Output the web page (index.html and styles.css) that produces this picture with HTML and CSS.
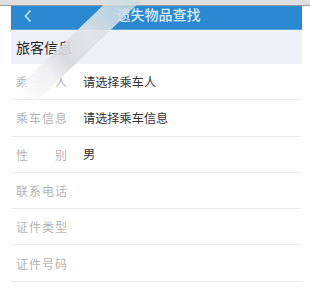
FILE: index.html
```html
<!DOCTYPE html>
<html lang="zh">
<head>
<meta charset="utf-8">
<link rel="stylesheet" href="styles.css">
</head>
<body>
<div class="topstrip"></div>
<div class="page">
  <header class="navbar">
    <svg class="back" width="10" height="14" viewBox="0 0 10 14"><path d="M7.5 1.5 L2.5 7 L7.5 12.5" fill="none" stroke="#cfe6f5" stroke-width="1.6"/></svg>
    <div class="title">遗失物品查找</div>
  </header>
  <div class="section">旅客信息</div>
  <div class="row"><span class="label">乘车人</span><span class="value">请选择乘车人</span></div>
  <div class="row"><span class="label">乘车信息</span><span class="value">请选择乘车信息</span></div>
  <div class="row"><span class="label">性别</span><span class="value">男</span></div>
  <div class="row"><span class="label">联系电话</span><span class="value"></span></div>
  <div class="row"><span class="label">证件类型</span><span class="value"></span></div>
  <div class="row"><span class="label">证件号码</span><span class="value"></span></div>
</div>
<div class="watermark"></div>
</body>
</html>
```
FILE: styles.css
```css
html, body {
  margin: 0;
  padding: 0;
  background: #fff;
  font-family: "Noto Sans CJK SC", "Noto Sans", sans-serif;
}
body {
  position: relative;
  width: 310px;
  height: 288px;
  overflow: hidden;
}
.topstrip {
  height: 5px;
  background: #dedede;
  border-bottom: 1px solid #9a9a9a;
}
.page {
  margin-left: 11px;
  width: 291px;
}
.navbar {
  position: relative;
  height: 23px;
  background: #2a89d0;
  display: flex;
  align-items: center;
  justify-content: center;
  border-bottom: 1px solid #5aa3da;
}
.back {
  position: absolute;
  left: 12px;
  top: 3px;
}
.title {
  color: #d9ecf8;
  font-size: 14px;
  line-height: 14px;
  font-weight: 500;
  margin-top: -8px;
  margin-left: 4px;
}
.section {
  height: 34px;
  background: #eef0f6;
  display: flex;
  align-items: center;
  padding-left: 5px;
  font-size: 14px;
  color: #222;
}
.row {
  height: 35.3px;
  border-bottom: 1px solid #ececec;
  display: flex;
  align-items: center;
  padding-left: 5px;
  font-size: 12px;
}
.label {
  width: 51px;
  color: #b4b4b4;
  text-align: justify;
  text-align-last: justify;
  margin-right: 16px;
}
.value {
  color: #333;
  font-size: 12.2px;
}
.watermark {
  position: absolute;
  left: 66px;
  top: -30px;
  width: 23px;
  height: 152px;
  transform: rotate(46deg);
  background: linear-gradient(to bottom, rgba(200,220,230,0.8), rgba(225,228,232,0.92) 40%, rgba(216,216,220,0.92) 62%, rgba(240,240,242,0.97) 75%, rgba(246,246,247,0.95) 88%, rgba(255,255,255,0));
}
```
